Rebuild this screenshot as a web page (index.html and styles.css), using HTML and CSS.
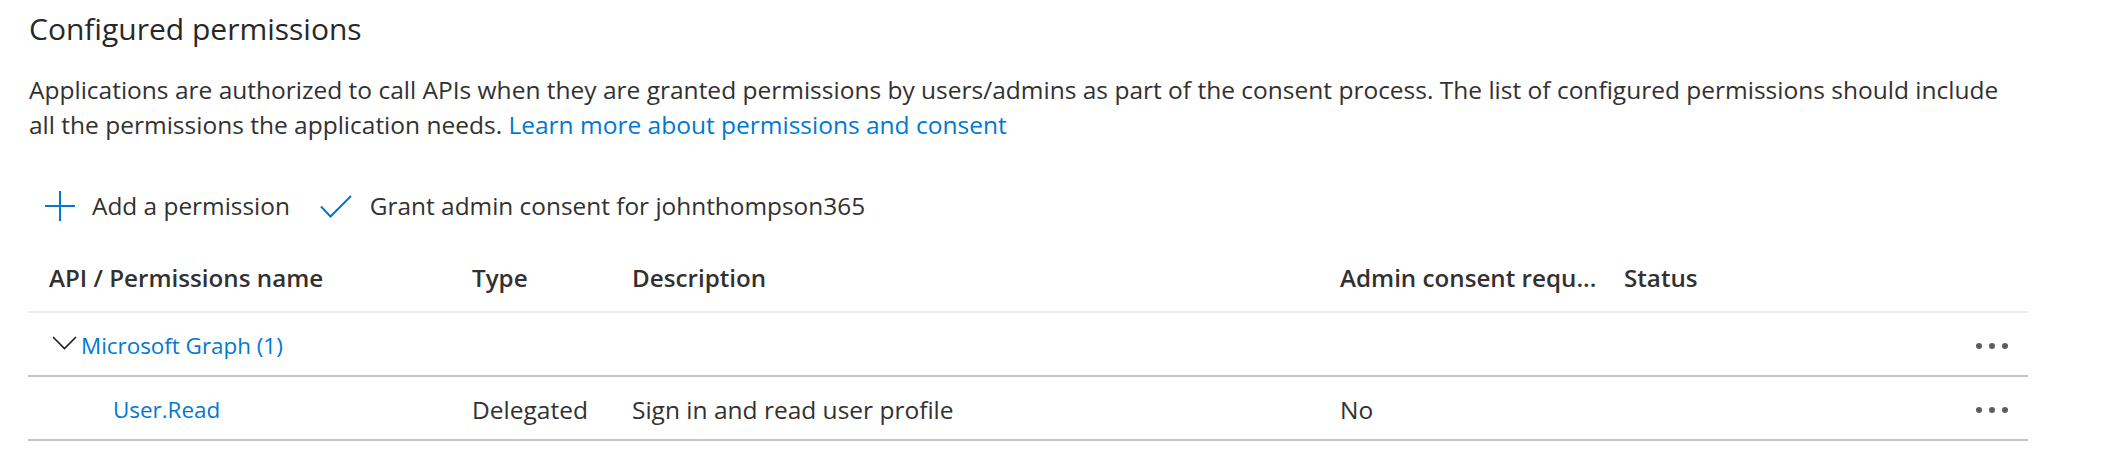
FILE: index.html
```html
<!DOCTYPE html>
<html lang="en">
<head>
<meta charset="utf-8">
<title>Configured permissions</title>
<link rel="stylesheet" href="styles.css">
</head>
<body>
<main class="page">
  <h2 class="title">Configured permissions</h2>
  <p class="desc">Applications are authorized to call APIs when they are granted permissions by users/admins as part of the consent process. The list of configured permissions should include all the permissions the application needs. <a class="link" href="#">Learn more about permissions and consent</a></p>

  <div class="toolbar">
    <button class="tool">
      <svg class="ico-plus" width="30" height="30" viewBox="0 0 30 30"><path d="M15 0V30M0 15H30" stroke="#0078d4" stroke-width="2" fill="none"/></svg>
      <span>Add a permission</span>
    </button>
    <button class="tool">
      <svg class="ico-check" width="32" height="23" viewBox="0 0 32 23"><path d="M1 11.5L10.5 21.5L31 1" stroke="#0078d4" stroke-width="2" fill="none"/></svg>
      <span>Grant admin consent for johnthompson365</span>
    </button>
  </div>

  <div class="table">
    <div class="row head">
      <div class="cell">API / Permissions name</div>
      <div class="cell">Type</div>
      <div class="cell">Description</div>
      <div class="cell">Admin consent requ...</div>
      <div class="cell">Status</div>
      <div class="cell"></div>
    </div>
    <div class="row group">
      <div class="cell name-group">
        <svg class="chev" width="25" height="14" viewBox="0 0 25 14"><path d="M1 1L12.5 12.5L24 1" stroke="#201f1e" stroke-width="1.6" fill="none"/></svg>
        <a class="link" href="#">Microsoft Graph (1)</a>
      </div>
      <div class="cell"></div>
      <div class="cell"></div>
      <div class="cell"></div>
      <div class="cell"></div>
      <div class="cell more"><span class="dot"></span><span class="dot"></span><span class="dot"></span></div>
    </div>
    <div class="row item">
      <div class="cell name-item"><a class="link" href="#">User.Read</a></div>
      <div class="cell">Delegated</div>
      <div class="cell">Sign in and read user profile</div>
      <div class="cell">No</div>
      <div class="cell"></div>
      <div class="cell more"><span class="dot"></span><span class="dot"></span><span class="dot"></span></div>
    </div>
  </div>
</main>
</body>
</html>
```
FILE: styles.css
```css
* { box-sizing: border-box; }
html, body { margin: 0; padding: 0; background: #ffffff; }
body {
  font-family: "Open Sans", "Noto Sans", sans-serif;
  color: #323130;
  font-size: 24px;
}
.page {
  padding: 9px 0 0 28px;
  width: 2126px;
}
.title {
  margin: 0 0 0 1px;
  font-size: 30px;
  font-weight: 400;
  line-height: 40px;
  color: #292827;
}
.desc {
  margin: 23px 0 0 1px;
  max-width: 1995px;
  font-size: 24.5px;
  line-height: 35px;
}
.link { color: #0078d4; text-decoration: none; }
.toolbar {
  display: flex;
  align-items: center;
  gap: 30px;
  margin-top: 47px;
  padding-left: 17px;
  height: 34px;
}
.tool {
  display: flex;
  align-items: center;
  gap: 17px;
  border: 0;
  background: none;
  padding: 0;
  font: inherit;
  font-size: 24.4px;
  line-height: 34px;
  color: #323130;
}
.ico-check { margin-right: 1px; }
.table {
  margin-top: 26px;
  width: 2000px;
}
.row {
  display: grid;
  grid-template-columns: 423px 160px 708px 284px 1fr 80px;
  align-items: center;
  height: 64px;
  line-height: 34px;
  font-size: 24.5px;
  border-bottom: 2px solid #c8c6c4;
  padding-top: 3px;
}
.row.head {
  border-bottom-color: #edebe9;
  font-weight: 600;
  font-size: 24.2px;
  padding-top: 0;
  padding-bottom: 5px;
}
.row .link { font-size: 22.4px; }
.cell {
  padding-left: 21px;
  white-space: nowrap;
}
.name-group {
  display: flex;
  align-items: center;
  gap: 4px;
  padding-left: 24px;
}
.chev { margin-top: -6px; }
.name-item { padding-left: 85px; }
.more {
  display: flex;
  justify-content: flex-end;
  gap: 7px;
  padding-left: 0;
  padding-right: 20px;
}
.dot {
  width: 6px;
  height: 6px;
  border-radius: 50%;
  background: #605e5c;
}
```
